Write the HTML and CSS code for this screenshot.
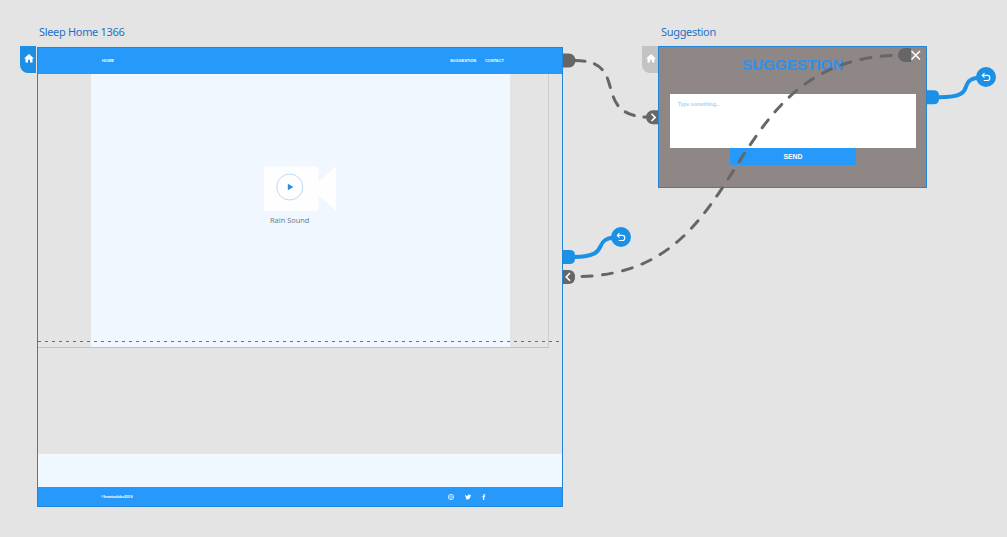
FILE: index.html
```html
<!DOCTYPE html>
<html lang="en">
<head>
<meta charset="utf-8">
<title>Prototype canvas</title>
<link rel="stylesheet" href="styles.css">
</head>
<body>
<main class="canvas">
  <section class="board board-home">
    <h2 class="board-title">Sleep Home 1366</h2>
    <div class="home-tab active"><svg width="10" height="9" viewBox="0 0 10 9"><path d="M5 0 10 4.6H8.5V8.6H6V5.8H4V8.6H1.500V4.600H0Z" fill="#fff"/></svg></div>
    <div class="artboard">
      <header class="nav"><span class="nav-home">HOME</span><span class="nav-sug">SUGGESTION</span><span class="nav-con">CONTACT</span></header>
      <div class="viewport">
        <div class="hero">
          <div class="player">
            <svg width="73" height="46" viewBox="0 0 73 46"><rect x="0" y="0.500" width="54.500" height="44.500" rx="3" fill="#fefeff"/><path d="M54 16.500 72 .5V45L54 29Z" fill="#fefeff"/><circle cx="25.800" cy="21" r="13" fill="#fefeff" stroke="#a9cff3" stroke-width=".8"/><path d="M23.800 17.800 29.300 21 23.800 24.200Z" fill="#258be8"/></svg>
            <span class="caption">Rain Sound</span>
          </div>
        </div>
      </div>
      <div class="band"></div>
      <footer class="footer">
        <span class="copy">©hwetudubs2019</span>
        <svg class="social" width="38" height="6" viewBox="0 0 38 6"><g fill="none" stroke="#fff" stroke-width=".65"><rect x=".5" y=".5" width="5" height="5" rx="1.500"/><circle cx="3" cy="3" r="1.300"/></g><path d="M17.200.8Q18.200 2 19.600 2C19.500.2 21.300.1 22 .9L23 .6 22.600 1.300 23.200 1.400 22.500 2C22.400 5.400 19.300 6 17.200 5L18.800 4.500 17.600 3.600 18.100 3.500 17.200 2.500 17.700 2.500Q17 1.700 17.200.8Z" fill="#fff"/><path d="M35 6V3.300H34.200V2.200H35C35 .5 35.600 0 37.300.2V1.200C36.400 1.100 36.200 1.300 36.200 2.200H37.300L37.100 3.300H36.200V6Z" fill="#fff"/></svg>
      </footer>
    </div>
  </section>
  <section class="board board-suggestion">
    <h2 class="board-title">Suggestion</h2>
    <div class="home-tab"><svg width="10" height="9" viewBox="0 0 10 9"><path d="M5 0 10 4.600H8.500V8.600H6V5.800H4V8.600H1.500V4.600H0Z" fill="#fff"/></svg></div>
    <div class="artboard">
      <h1 class="heading">SUGGESTION</h1>
      <div class="field">Type something...</div>
      <div class="send">SEND</div>
    </div>
  </section>
  <svg class="wires" width="1007" height="537" viewBox="0 0 1007 537">
    <path d="M38 341.500H561" stroke="#2582cc" stroke-dasharray="3 4" fill="none"/>
    <g fill="none" stroke="#666" stroke-width="3" stroke-linecap="round">
      <path d="M575 60.500C632 60.500 588 117.300 651 117.300" stroke-dasharray="10 9.700"/>
      <path d="M582 276.500C758 271 714 55 905 55" stroke-dasharray="10 10.500"/>
    </g>
    <g fill="#666">
      <path d="M563 53.500H569A6.500 7 0 0 1 569 67.500H563Z"/>
      <path d="M658 110.300H653A7 7 0 0 0 653 124.300H658Z"/>
      <path d="M563 270H569A6 6 0 0 1 575 276V278A6 6 0 0 1 569 284H563Z"/>
      <path d="M911 48H905A7 7 0 0 0 905 62H911Z"/>
    </g>
    <g fill="none" stroke="#fff" stroke-width="1.600">
      <path d="M651.500 113.800 655.200 117.400 651.500 121M570 273 566.200 276.900 570 280.800M911.500 51 920 59.500M920 51 911.500 59.500"/>
    </g>
    <g fill="none" stroke="#1b90e5" stroke-width="4">
      <path d="M574 257C615 257 587 237 621 237M939 97.300C984 97 950 77.300 986 77.300"/>
    </g>
    <g fill="#1b90e5">
      <path d="M563 250H569.500Q575 250 575 255V259Q575 264 569.500 264H563Z"/>
      <path d="M927 90.200H933.500Q939 90.200 939 95.200V99.200Q939 104.200 933.500 104.200H927Z"/>
      <circle cx="621" cy="237" r="10"/><circle cx="986" cy="77" r="10"/>
    </g>
    <g fill="none" stroke="#fff" stroke-width="1.100">
      <path id="undo" d="M619.500 233.200 617.300 235.400 619.500 237.600M617.500 235.400H622.300A2.500 2.500 0 0 1 622.300 240.500H618.800"/>
      <use href="#undo" x="365" y="-160"/>
    </g>
  </svg>
</main>
</body>
</html>
```

FILE: styles.css
```css
* { box-sizing: border-box; }
body { margin: 0; background: #e4e4e4; font-family: "Noto Sans", sans-serif; }
.canvas { position: relative; width: 1007px; height: 537px; overflow: hidden; }
svg { display: block; flex: none; }
.board { position: absolute; top: 24px; display: grid; grid-template-rows: 22px auto; }
.board-home { left: 20px; grid-template-columns: 17px 526px; }
.board-suggestion { left: 642px; grid-template-columns: 16px 269px; }
.board-title { grid-column: 2; margin: 0; padding-left: 2px; font-size: 11px; font-weight: 400; line-height: 16px; letter-spacing: -.32px; color: #1b72c8; white-space: nowrap; }
.board-suggestion .board-title { padding-left: 3px; }
.home-tab { grid-column: 1; height: 27px; padding: 8px 0 0 4px; border-radius: 0 0 0 8px; background: #c3c3c3; }
.home-tab.active { width: 16px; background: #1b90e5; }
.artboard { grid-column: 2; border: 1px solid #2385d8; }
.board-home .artboard { margin-top: 1px; height: 460px; }
.nav { display: flex; height: 26px; align-items: center; background: #2699fb; color: #fff; font: 700 4px/6px "Liberation Sans", sans-serif; letter-spacing: -.05px; padding-left: 64px; }
.nav-home { width: 348px; }
.nav-sug { width: 35px; }
.viewport { width: 511px; height: 274px; padding-left: 53px; border-right: 1px solid #cdcdcd; border-bottom: 1px solid #c2c2c2; }
.hero { width: 419px; height: 273px; background: #f0f7ff; padding: 92px 0 0 173px; }
.player { width: 73px; }
.caption { display: block; margin: 2px 0 0 6px; color: #777c84; font-size: 7.400px; line-height: 12px; white-space: nowrap; }
.band { height: 33px; margin-top: 106px; background: #f0f8ff; }
.footer { display: flex; height: 19px; align-items: center; background: #2699fb; color: #fff; padding-left: 63px; font: 700 4px/6px "Liberation Sans", sans-serif; }
.copy { width: 347px; letter-spacing: -.1px; padding-top: 1px; }
.board-suggestion .artboard { height: 142px; padding: 9px 11px 0; background: #8f8686; }
.heading { margin: 0; height: 38px; text-align: center; font: 700 15.500px/17px "Liberation Sans", sans-serif; color: #2d91ed; letter-spacing: -.2px; }
.field { width: 246px; height: 54px; padding: 7px 8px; background: #fff; color: #a5d3fa; font: 700 5px/7px "Liberation Sans", sans-serif; }
.send { width: 126px; height: 17px; margin-left: 60px; background: #2699fb; color: #fff; text-align: center; font: 700 6.800px/18px "Liberation Sans", sans-serif; }
.wires { position: absolute; left: 0; top: 0; pointer-events: none; }
```
